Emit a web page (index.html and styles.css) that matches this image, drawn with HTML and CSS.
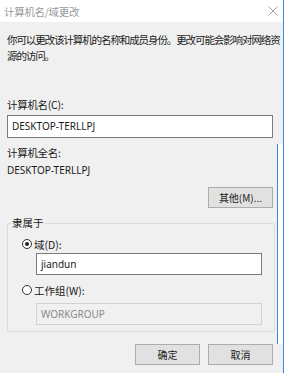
FILE: index.html
```html
<!DOCTYPE html>
<html lang="zh">
<head>
<meta charset="utf-8">
<link rel="stylesheet" href="styles.css">
</head>
<body>
<div class="window">
  <div class="titlebar">
    <span class="title">计算机名/域更改</span>
    <svg class="close" width="10" height="10" viewBox="0 0 10 10"><path d="M0.5 0.5 L9.5 9.5 M9.5 0.5 L0.5 9.5" stroke="#a0a0a0" stroke-width="1"/></svg>
  </div>
  <div class="body">
    <p class="intro">你可以更改该计算机的名称和成员身份。更改可能会影响对网络资源的访问。</p>
    <div class="label lbl-name">计算机名(C):</div>
    <div class="input">DESKTOP-TERLLPJ</div>
    <div class="label lbl-full">计算机全名:</div>
    <div class="value">DESKTOP-TERLLPJ</div>
    <div class="btnrow row-more"><div class="btn">其他(M)...</div></div>
    <fieldset class="group">
      <legend>隶属于</legend>
      <div class="radio-row"><span class="radio checked"></span><span>域(D):</span></div>
      <div class="input sub">jiandun</div>
      <div class="radio-row r2"><span class="radio"></span><span>工作组(W):</span></div>
      <div class="input sub disabled">WORKGROUP</div>
    </fieldset>
    <div class="btnrow row-ok"><div class="btn">确定</div><div class="btn">取消</div></div>
  </div>
  <div class="edge"></div>
</div>
</body>
</html>
```
FILE: styles.css
```css
html, body { margin: 0; padding: 0; }
body {
  width: 285px; height: 373px; overflow: hidden; background: #fff;
  font-family: "Noto Sans CJK SC", "Noto Sans", sans-serif;
  font-size: 10.5px; color: #1a1a1a;
}
.window {
  position: relative; width: 284px; height: 373px;
  border-right: 1px solid #3f86d8; box-sizing: border-box;
  display: flex; flex-direction: column;
}
.titlebar {
  height: 22px; background: #fff; display: flex; align-items: center;
  justify-content: space-between; padding: 0 5px 0 4px; box-sizing: border-box;
}
.title { color: #9a9a9a; font-size: 10.5px; letter-spacing: -0.3px; }
.close { margin-top: -1px; }
.body {
  flex: 1; background: #f0f0f0; padding: 0 0 0 7px; box-sizing: border-box;
  display: flex; flex-direction: column;
}
.intro { margin: 10px 0 0 0; width: 274px; line-height: 16px; letter-spacing: -1.1px; }
.label { line-height: 14px; letter-spacing: -0.3px; }
.lbl-name { margin-top: 34px; }
.input {
  width: 266px; height: 23px; box-sizing: border-box; background: #fff;
  border: 1px solid #7a7a7a; padding: 0 4px; line-height: 20px;
  font-family: "Noto Sans", "Noto Sans CJK SC", sans-serif; font-size: 10px;
  margin-top: 3px;
}
.lbl-full { margin-top: 8px; }
.value { margin-top: 2px; font-family: "Noto Sans", sans-serif; font-size: 10px; line-height: 16px; }
.btnrow { display: flex; justify-content: flex-end; gap: 8px; width: 266px; }
.row-more { margin-top: 9px; }
.btn {
  width: 65px; height: 21px; box-sizing: border-box; background: #e1e1e1;
  border: 1px solid #adadad; display: flex; align-items: center; justify-content: center;
  font-size: 10px;
}
.group {
  margin: 8px 0 0 0; width: 268px; height: 116px; box-sizing: border-box;
  border: 1px solid #dcdcdc; border-radius: 2px; padding: 6px 0 0 14px;
  min-width: 0;
}
.group legend { padding: 0; margin-left: -10px; line-height: 14px; }
.radio-row { display: flex; align-items: center; gap: 2px; height: 16px; }
.radio {
  width: 10px; height: 10px; border: 1px solid #333; border-radius: 50%;
  background: #fff; box-sizing: border-box; position: relative;
}
.radio.checked::after {
  content: ""; position: absolute; left: 2px; top: 2px; width: 4px; height: 4px;
  border-radius: 50%; background: #222;
}
.input.sub { width: 226px; margin: 1px 0 0 14px; height: 22px; }
.r2 { margin-top: 7px; }
.input.disabled { background: #f0f0f0; border-color: #d2d2d2; color: #8a8a8a; margin-top: 5px; }
.row-ok { margin-top: 12px; }
.edge {
  position: absolute; left: 277px; top: 144px; width: 6px; height: 200px;
  background: #fff; border-left: 1px solid #3f86d8; box-sizing: border-box;
}
```
